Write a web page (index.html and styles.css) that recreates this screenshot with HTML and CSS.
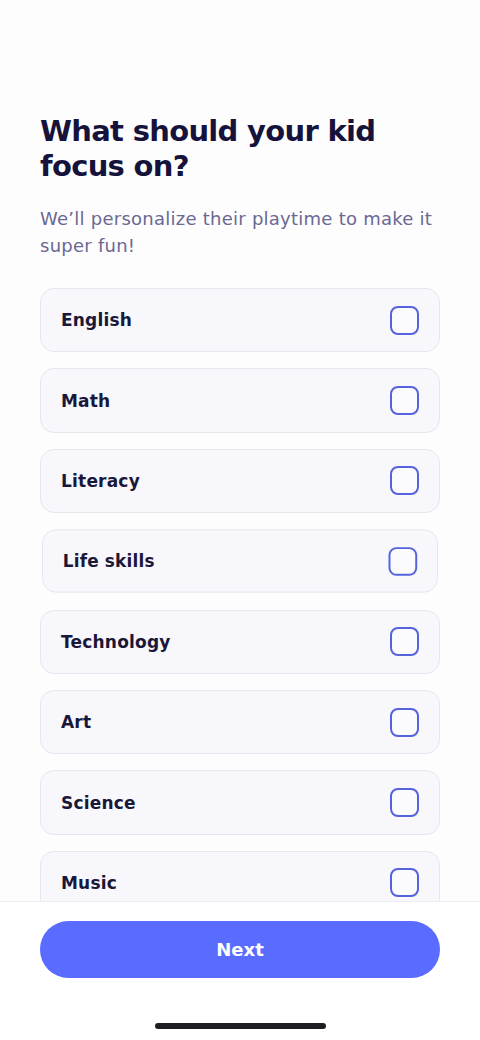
FILE: index.html
```html
<!DOCTYPE html>
<html lang="en">
<head>
<meta charset="utf-8">
<meta name="viewport" content="width=480">
<title>Focus</title>
<link rel="stylesheet" href="styles.css">
</head>
<body>
<div class="screen">
  <main class="content">
    <h1 class="title">What should your kid focus on?</h1>
    <p class="subtitle">We’ll personalize their playtime to make it super fun!</p>
    <ul class="options">
      <li class="option"><span class="label">English</span><span class="check"></span></li>
      <li class="option"><span class="label">Math</span><span class="check"></span></li>
      <li class="option"><span class="label">Literacy</span><span class="check"></span></li>
      <li class="option pressed"><span class="label">Life skills</span><span class="check"></span></li>
      <li class="option"><span class="label">Technology</span><span class="check"></span></li>
      <li class="option"><span class="label">Art</span><span class="check"></span></li>
      <li class="option"><span class="label">Science</span><span class="check"></span></li>
      <li class="option"><span class="label">Music</span><span class="check"></span></li>
      <li class="option"><span class="label">Social skills</span><span class="check"></span></li>
    </ul>
  </main>
  <footer class="footer">
    <button class="next">Next</button>
    <div class="home-indicator"></div>
  </footer>
</div>
</body>
</html>
```

FILE: styles.css
```css
* { box-sizing: border-box; }
html, body {
  margin: 0;
  padding: 0;
  background: #fdfdfe;
}
body {
  font-family: "DejaVu Sans", "Noto Sans", sans-serif;
  color: #17153a;
}
.screen {
  position: relative;
  width: 480px;
  height: 1040px;
  overflow: hidden;
}
.content {
  padding: 114px 40px 0;
}
.title {
  margin: 0;
  font-size: 29px;
  line-height: 35px;
  font-weight: 700;
  color: #15133b;
  letter-spacing: -0.7px;
}
.subtitle {
  margin: 21px 0 0;
  font-size: 18px;
  line-height: 27px;
  color: #6b6892;
  font-weight: 400;
  letter-spacing: 0.25px;
}
.options {
  list-style: none;
  margin: 29px 0 0;
  padding: 0;
  display: flex;
  flex-direction: column;
  gap: 16px;
}
.option {
  height: 64.4px;
  display: flex;
  align-items: center;
  justify-content: space-between;
  padding: 0 20px 0 20px;
  background: #f7f7fc;
  border: 1px solid #e6e6ef;
  border-radius: 14px;
}
.option.pressed {
  transform: scale(0.99);
}
.label {
  font-size: 17px;
  font-weight: 700;
  color: #1a1839;
  letter-spacing: 0.2px;
}
.check {
  width: 29px;
  height: 29px;
  border: 2.5px solid #5563dc;
  border-radius: 8px;
  background: #fbfbfe;
}
.footer {
  position: absolute;
  left: 0;
  right: 0;
  bottom: 0;
  height: 139px;
  background: rgba(255, 255, 255, 0.93);
  border-top: 1px solid #ececf2;
  display: flex;
  flex-direction: column;
  align-items: center;
  padding-top: 19px;
}
.next {
  width: 400px;
  height: 57px;
  border: none;
  border-radius: 29px;
  background: #596cff;
  color: #ffffff;
  font-family: inherit;
  font-size: 18px;
  font-weight: 700;
}
.home-indicator {
  margin-top: 45px;
  width: 171px;
  height: 6px;
  border-radius: 3px;
  background: #1d1d22;
}
```
